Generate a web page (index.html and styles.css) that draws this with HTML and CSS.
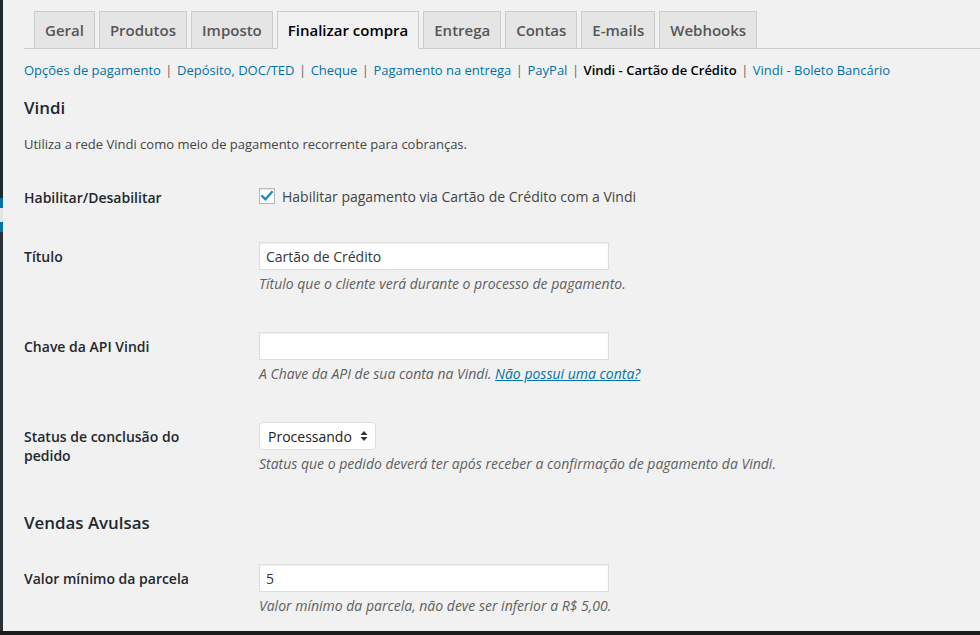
FILE: index.html
```html
<!DOCTYPE html>
<html lang="pt-BR">
<head>
    <meta charset="UTF-8">
    <meta name="viewport" content="width=device-width, initial-scale=1.0">
    <title>Configurações - Finalizar compra</title>
    <link rel="stylesheet" href="styles.css">
</head>
<body>
    <div class="screen">
        <div class="workspace">
            <div class="menu-edge"></div>

            <div class="wrap">
                <nav class="nav-tabs">
                    <a href="#" class="nav-tab">Geral</a>
                    <a href="#" class="nav-tab">Produtos</a>
                    <a href="#" class="nav-tab">Imposto</a>
                    <a href="#" class="nav-tab nav-tab-active">Finalizar compra</a>
                    <a href="#" class="nav-tab">Entrega</a>
                    <a href="#" class="nav-tab">Contas</a>
                    <a href="#" class="nav-tab">E-mails</a>
                    <a href="#" class="nav-tab">Webhooks</a>
                </nav>

                <ul class="subsubsub">
                    <li><a href="#">Opções de pagamento</a><span class="sep">|</span></li><li><a href="#">Depósito, DOC/TED</a><span class="sep">|</span></li><li><a href="#">Cheque</a><span class="sep">|</span></li><li><a href="#">Pagamento na entrega</a><span class="sep">|</span></li><li><a href="#">PayPal</a><span class="sep">|</span></li><li><a href="#" class="current">Vindi - Cartão de Crédito</a><span class="sep">|</span></li><li><a href="#">Vindi - Boleto Bancário</a></li>
                </ul>

                <h2 class="section-title">Vindi</h2>
                <p class="intro">Utiliza a rede Vindi como meio de pagamento recorrente para cobranças.</p>

                <div class="form-table">
                    <div class="form-row">
                        <label class="form-label" for="enabled">Habilitar/Desabilitar</label>
                        <div class="form-field field-check">
                            <span class="checkbox" id="enabled">
                                <svg width="16" height="16" viewBox="0 0 16 16">
                                    <path d="M3.2 8.2 L6.4 11.3 L12.8 4.2" fill="none" stroke="#1e8cbe" stroke-width="2.3" stroke-linecap="square"/>
                                </svg>
                            </span>
                            <span class="check-text">Habilitar pagamento via Cartão de Crédito com a Vindi</span>
                        </div>
                    </div>

                    <div class="form-row">
                        <label class="form-label" for="title">Título</label>
                        <div class="form-field">
                            <input type="text" id="title" class="text-input" value="Cartão de Crédito">
                            <p class="description">Título que o cliente verá durante o processo de pagamento.</p>
                        </div>
                    </div>

                    <div class="form-row">
                        <label class="form-label" for="api-key">Chave da API Vindi</label>
                        <div class="form-field">
                            <input type="text" id="api-key" class="text-input" value="">
                            <p class="description">A Chave da API de sua conta na Vindi. <a href="#">Não possui uma conta?</a></p>
                        </div>
                    </div>

                    <div class="form-row">
                        <label class="form-label" for="status">Status de conclusão do pedido</label>
                        <div class="form-field">
                            <span class="select-wrap">
                                <select id="status" class="select-input">
                                    <option>Processando</option>
                                </select>
                                <svg class="select-arrows" width="8" height="12" viewBox="0 0 8 12">
                                    <path d="M4 1 L7.5 5 L0.5 5 Z M4 11 L7.5 7 L0.5 7 Z" fill="#333"/>
                                </svg>
                            </span>
                            <p class="description">Status que o pedido deverá ter após receber a confirmação de pagamento da Vindi.</p>
                        </div>
                    </div>
                </div>

                <h2 class="section-title section-second">Vendas Avulsas</h2>

                <div class="form-table">
                    <div class="form-row">
                        <label class="form-label" for="min-value">Valor mínimo da parcela</label>
                        <div class="form-field">
                            <input type="text" id="min-value" class="text-input" value="5">
                            <p class="description">Valor mínimo da parcela, não deve ser inferior a R$ 5,00.</p>
                        </div>
                    </div>
                </div>
            </div>
        </div>
        <div class="bottom-bar"></div>
    </div>
</body>
</html>
```

FILE: styles.css
```css
body {
    margin: 0;
    padding: 0;
    background: #f1f1f1;
    font-family: "Open Sans", "Liberation Sans", sans-serif;
    font-size: 13px;
    color: #444;
    overflow: hidden;
}

.screen {
    display: flex;
    flex-direction: column;
    height: 635px;
}

.workspace {
    flex: 1;
    display: flex;
    overflow: hidden;
}

.menu-edge {
    width: 3px;
    flex-shrink: 0;
    background: linear-gradient(to bottom,
        #23282d 0, #23282d 198px,
        #0073aa 198px, #0073aa 208px,
        #e4e4e4 208px, #e4e4e4 222px,
        #0073aa 222px, #0073aa 232px,
        #2c3136 232px, #2c3136 100%);
}

.wrap {
    flex: 1;
    padding-left: 21px;
}

/* tabs */
.nav-tabs {
    display: flex;
    align-items: flex-end;
    gap: 4px;
    padding: 11px 0 0 10px;
    border-bottom: 1px solid #ccc;
}

.nav-tab {
    padding: 6px 10px;
    font-size: 15px;
    line-height: 24px;
    font-weight: 600;
    color: #555;
    background: #e5e5e5;
    border: 1px solid #ccc;
    border-bottom: none;
    text-decoration: none;
    white-space: nowrap;
}

.nav-tab-active {
    color: #000;
    background: #f1f1f1;
    border-bottom: 1px solid #f1f1f1;
    margin-bottom: -1px;
}

/* sub links */
.subsubsub {
    margin: 8px 0 0;
    padding: 0;
    list-style: none;
    font-size: 13px;
    line-height: 26px;
    color: #666;
    white-space: nowrap;
}

.subsubsub li {
    display: inline;
}

.subsubsub a {
    color: #0073aa;
    text-decoration: none;
}

.subsubsub .sep {
    padding: 0 4.5px;
}

.subsubsub a.current {
    color: #000;
    font-weight: 600;
}

.section-title {
    margin: 12px 0 0;
    font-size: 16.9px;
    line-height: 25px;
    font-weight: 600;
    color: #23282d;
}

.section-second {
    margin-top: 13px;
}

.intro {
    margin: 14px 0 0;
    line-height: 20px;
}

/* form rows */
.form-table {
    margin-top: 14px;
}

.form-row {
    display: grid;
    grid-template-columns: 235px 1fr;
}

.form-label {
    padding: 20px 35px 20px 0;
    font-size: 14px;
    line-height: 19px;
    font-weight: 600;
    color: #23282d;
}

.form-field {
    padding: 15px 10px 23px 0;
}

.field-check {
    display: flex;
    align-items: center;
    gap: 7px;
    height: 26px;
    padding-bottom: 15px;
}

.checkbox {
    width: 14px;
    height: 14px;
    border: 1px solid #b4b9be;
    background: #fff;
    box-shadow: inset 0 1px 2px rgba(0, 0, 0, 0.1);
    position: relative;
}

.checkbox svg {
    position: absolute;
    left: -1px;
    top: -1px;
}

.check-text {
    font-size: 14px;
    color: #444;
}

.text-input {
    display: block;
    box-sizing: border-box;
    width: 350px;
    height: 28px;
    margin: 0;
    padding: 0 6px;
    border: 1px solid #ddd;
    background: #fff;
    box-shadow: inset 0 1px 2px rgba(0, 0, 0, 0.07);
    font-family: "Open Sans", "Liberation Sans", sans-serif;
    font-size: 14px;
    color: #32373c;
    outline: none;
}

.select-wrap {
    position: relative;
    display: inline-block;
    vertical-align: top;
}

.select-input {
    display: block;
    box-sizing: border-box;
    width: 117px;
    height: 28px;
    margin: 0;
    padding: 0 8px;
    border: 1px solid #ddd;
    border-radius: 4px;
    background: #fff;
    -webkit-appearance: none;
    appearance: none;
    font-family: "Open Sans", "Liberation Sans", sans-serif;
    font-size: 14px;
    color: #222;
}

.select-arrows {
    position: absolute;
    right: 8px;
    top: 8px;
    pointer-events: none;
}

.description {
    margin: 4px 0 0;
    font-size: 14px;
    line-height: 20px;
    font-style: italic;
    color: #5f5f5f;
    white-space: nowrap;
}

.description a {
    color: #0073aa;
}

.bottom-bar {
    height: 4px;
    background: #1c1c1c;
}
```
